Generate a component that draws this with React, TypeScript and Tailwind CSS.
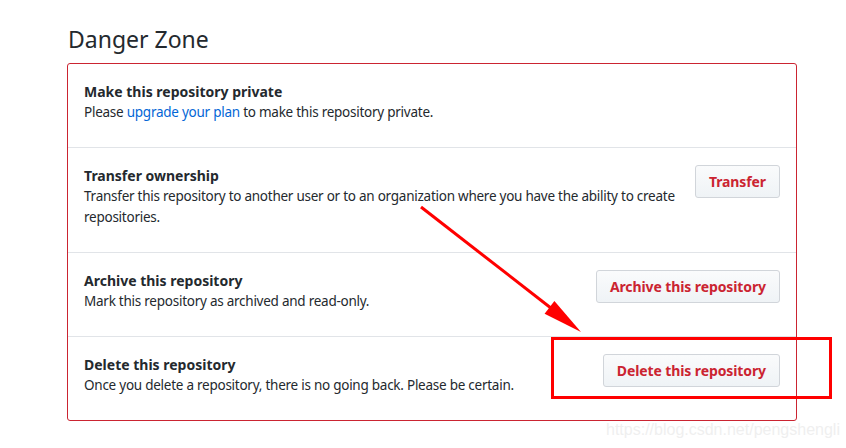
const rows = [
  {
    title: 'Make this repository private',
    body: (
      <>
        Please <a className="text-[#0366d6]">upgrade your plan</a> to make this repository private.
      </>
    ),
    action: null as string | null,
  },
  {
    title: 'Transfer ownership',
    body: 'Transfer this repository to another user or to an organization where you have the ability to create repositories.',
    action: 'Transfer',
  },
  {
    title: 'Archive this repository',
    body: 'Mark this repository as archived and read-only.',
    action: 'Archive this repository',
  },
  {
    title: 'Delete this repository',
    body: 'Once you delete a repository, there is no going back. Please be certain.',
    action: 'Delete this repository',
  },
];

export default function App() {
  return (
    <div
      className="relative w-[846px] h-[448px] bg-white overflow-hidden text-[#24292e]"
      style={{ fontFamily: '"Noto Sans", "Open Sans", sans-serif' }}
    >
      <div className="pl-[67px] pt-[24px]">
        <h2 className="text-[23px] leading-[30px] font-normal mb-[9px] pl-px">Danger Zone</h2>

        <div className="w-[730px] border border-[#cb2431] rounded-[3px]">
          {rows.map((row, i) => (
            <div
              key={row.title}
              className={
                'flex items-start justify-between gap-3 px-4 pt-[17px] pb-6' +
                (i > 0 ? ' border-t border-[#e1e4e8]' : '')
              }
            >
              <div className="flex-1 min-w-0">
                <div className="text-[14px] leading-[21px] font-bold">{row.title}</div>
                <p className="text-[13.5px] leading-[21px] tracking-[-0.25px]">{row.body}</p>
              </div>
              {row.action && (
                <button className="shrink-0 h-[33px] px-[13px] rounded-[3px] border border-[#d1d5da] bg-gradient-to-b from-[#fafbfc] to-[#eff3f6] text-[#cb2431] text-[14px] font-bold tracking-[-0.1px]">
                  {row.action}
                </button>
              )}
            </div>
          ))}
        </div>
      </div>

      {/* annotation */}
      <svg className="absolute inset-0 pointer-events-none" width="846" height="448">
        <line x1="421" y1="207" x2="556" y2="312" stroke="#ff0000" strokeWidth="3" />
        <polygon points="581,332 544.6,313.7 554.4,301.1" fill="#ff0000" />
        <rect x="552.5" y="338.5" width="278" height="59" fill="none" stroke="#ff0000" strokeWidth="3" />
      </svg>

      <div
        className="absolute left-[606px] top-[420px] text-[16px] leading-[20px] text-[#efefef]"
        style={{ fontFamily: '"Liberation Sans", Arial, sans-serif' }}
      >
        https://blog.csdn.net/pengshengli
      </div>
    </div>
  );
}
